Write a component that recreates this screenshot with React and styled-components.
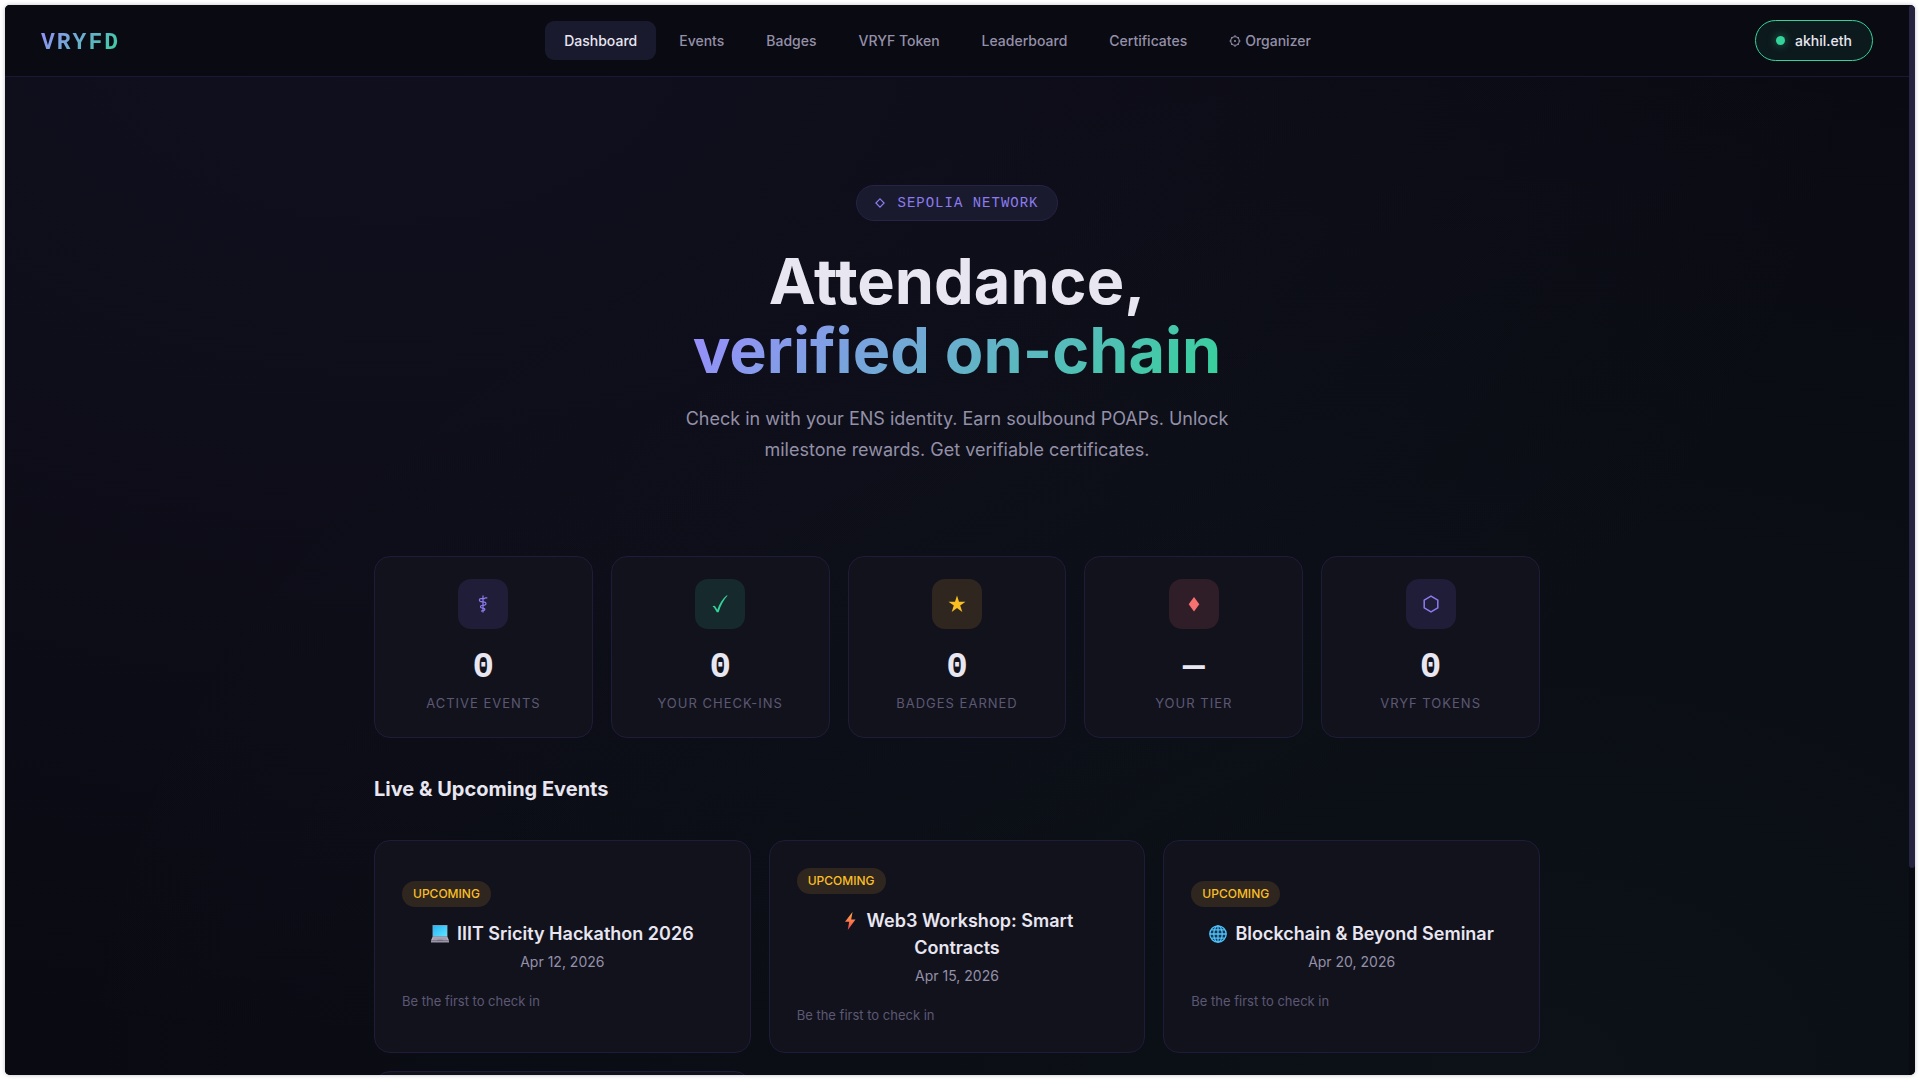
import React from 'react';
import styled, { createGlobalStyle } from 'styled-components';

const SANS = 'Inter, "Liberation Sans", sans-serif';
const MONO = '"Liberation Mono", monospace';

const GlobalStyle = createGlobalStyle`
  * {
    box-sizing: border-box;
  }

  body {
    margin: 0;
    background: #ffffff;
    color: #e8e6f0;
    font-family: ${SANS};
    -webkit-font-smoothing: antialiased;
  }

  h1, h2, h3, p {
    margin: 0;
  }
`;

const Screen = styled.div`
  height: 100vh;
  padding: 5px;
`;

const Shell = styled.div`
  display: flex;
  height: 100%;
  overflow: hidden;
  border-radius: 5px;
  box-shadow: 0 0 4px rgba(0, 0, 0, 0.25);
  background: #0a0a12;
`;

const Page = styled.div`
  flex: 1;
  min-width: 0;
  overflow: hidden;
  background:
    radial-gradient(ellipse at 20% 0%, rgba(124, 108, 240, 0.06) 0%, transparent 70%),
    radial-gradient(ellipse at 80% 100%, rgba(52, 211, 153, 0.04) 0%, transparent 70%),
    #0a0a12;
`;

const ScrollTrack = styled.div`
  width: 6px;
  background: #0a0a12;
`;

const ScrollThumb = styled.div`
  height: 80.7%;
  border-radius: 3px;
  background: #25233f;
`;

const Header = styled.header`
  display: flex;
  align-items: center;
  justify-content: space-between;
  height: 72px;
  padding: 0 36px;
  border-bottom: 1px solid #1a1934;
  background: #0a0a12;
`;

const Logo = styled.a`
  padding-top: 4px;
  font-family: ${MONO};
  font-size: 23px;
  font-weight: 700;
  letter-spacing: 2px;
  text-decoration: none;
  color: transparent;
  background: linear-gradient(135deg, #9b8cff, #34d399);
  background-clip: text;
`;

const Nav = styled.nav`
  display: flex;
  gap: 4px;
`;

const NavLink = styled.a`
  display: flex;
  align-items: center;
  gap: 4px;
  height: 39px;
  padding: 0 19px;
  border-radius: 9px;
  font-size: 14px;
  font-weight: 500;
  text-decoration: none;
  color: ${(p) => (p.$active ? '#e8e6f0' : '#9490a8')};
  background: ${(p) => (p.$active ? '#1a1a2e' : 'transparent')};
`;

const Wallet = styled.button`
  display: flex;
  align-items: center;
  gap: 10px;
  height: 41px;
  padding: 0 20px;
  border: 1px solid #34d399;
  border-radius: 21px;
  background: #0d1a1d;
  color: #e8e6f0;
  font-family: ${SANS};
  font-size: 14px;
  font-weight: 500;
`;

const Dot = styled.span`
  width: 9px;
  height: 9px;
  border-radius: 50%;
  background: #34d399;
  box-shadow: 0 0 9px rgba(52, 211, 153, 0.5);
`;

const Main = styled.main`
  max-width: 1166px;
  margin: 0 auto;
`;

const Hero = styled.section`
  display: flex;
  flex-direction: column;
  align-items: center;
  padding: 108px 0 91px;
  text-align: center;
`;

const Network = styled.div`
  display: flex;
  align-items: center;
  gap: 12px;
  height: 36px;
  margin-bottom: 26px;
  padding: 0 18px;
  border: 1px solid #262347;
  border-radius: 18px;
  background: #1a1a2e;
  color: #8b7cf0;
  font-family: ${MONO};
  font-size: 14px;
  letter-spacing: 1px;
`;

const Title = styled.h1`
  font-size: 63px;
  font-weight: 700;
  line-height: 69px;
`;

const Gradient = styled.span`
  display: block;
  color: transparent;
  background: linear-gradient(135deg, #9b8cff, #34d399);
  background-clip: text;
`;

const Lead = styled.p`
  max-width: 580px;
  margin-top: 18px;
  font-size: 18px;
  line-height: 31px;
  color: #9490a8;
`;

const Stats = styled.section`
  display: grid;
  grid-template-columns: repeat(5, 1fr);
  gap: 18px;
`;

const StatCard = styled.div`
  display: flex;
  flex-direction: column;
  align-items: center;
  height: 182px;
  padding-top: 22px;
  border: 1px solid #1f1c39;
  border-radius: 16px;
  background: #12121d;
`;

const tones = {
  purple: { color: '#8b7cf0', background: '#201d38' },
  green: { color: '#34d399', background: '#162a2e' },
  amber: { color: '#fbbf24', background: '#2f2620' },
  red: { color: '#f87171', background: '#2f1e28' },
};

const StatIcon = styled.div`
  display: flex;
  align-items: center;
  justify-content: center;
  width: 50px;
  height: 50px;
  margin-bottom: 21px;
  border-radius: 13px;
  color: ${(p) => tones[p.$tone].color};
  background: ${(p) => tones[p.$tone].background};
`;

const StatValue = styled.div`
  font-family: ${MONO};
  font-size: 36px;
  font-weight: 700;
  line-height: 36px;
`;

const StatLabel = styled.div`
  margin-top: 7px;
  font-size: 13px;
  line-height: 20px;
  letter-spacing: 1px;
  text-transform: uppercase;
  color: #5c5873;
`;

const SectionTitle = styled.h2`
  margin: 35px 0;
  font-size: 20px;
  font-weight: 700;
  line-height: 32px;
`;

const Events = styled.section`
  display: grid;
  grid-template-columns: repeat(3, 1fr);
  gap: 18px;
`;

const EventCard = styled.article`
  display: flex;
  flex-direction: column;
  justify-content: center;
  min-height: 213px;
  padding: 26px 27px;
  border: 1px solid #1f1c39;
  border-radius: 16px;
  background: #12121d;
`;

const Status = styled.span`
  align-self: flex-start;
  margin-bottom: 13px;
  padding: 0 11px;
  border-radius: 13px;
  font-size: 12px;
  font-weight: 500;
  line-height: 26px;
  text-transform: uppercase;
  color: #fbbf24;
  background: #2f2620;
`;

const EventName = styled.h3`
  font-size: 18px;
  font-weight: 600;
  line-height: 27px;
  text-align: center;

  svg {
    margin-right: 8px;
    vertical-align: -3px;
  }
`;

const EventDate = styled.p`
  margin-top: 3px;
  font-size: 14px;
  line-height: 24px;
  text-align: center;
  color: #9490a8;
`;

const EventNote = styled.p`
  margin-top: 17px;
  font-size: 13px;
  line-height: 21px;
  color: #5c5873;
`;

const GearIcon = () => (
  <svg width="12" height="14" viewBox="0 0 11 12" fill="none" stroke="currentColor">
    <circle cx="5.5" cy="6" r="3.9" />
    <path d="M5.5 .5V2M5.5 10v1.5M.5 6H2M9 6h1.5M2 2.5l1 1M8 8.5l1 1M9 2.5l-1 1M3 8.5l-1 1" strokeWidth=".9" />
    <circle cx="5.5" cy="6" r=".9" fill="currentColor" stroke="none" />
  </svg>
);

const DiamondOutline = () => (
  <svg width="10" height="10" viewBox="0 0 10 10" fill="none" stroke="currentColor" strokeWidth="1.2">
    <path d="M5 .9 9.1 5 5 9.1.9 5z" />
  </svg>
);

const StaffIcon = () => (
  <svg width="10" height="18" viewBox="0 0 10 18" fill="none" stroke="currentColor" strokeWidth="1.2">
    <path d="M5 .5v17" />
    <path d="M9.300 2.800H7.500L6.300 3.600H3C.8 3.600.8 6.500 3 6.700l3.500.5c2 .4 2 2.600 0 2.900l-2.700.4c-1.700.3-1.700 2.200 0 2.500l2 .4c1.500.3 1.300 1.800 0 2.100L3 16.200" />
  </svg>
);

const CheckIcon = () => (
  <svg width="18" height="18" viewBox="0 0 18 18" fill="currentColor">
    <path d="M1.500 11.500c1-.9 2.300-.9 3 .2l1.800 3C8.600 8.500 11.500 3.600 15.500.5h1.200C12.500 5 9.800 10.200 7.600 17.200H5.800L3 12.600c-.4-.6-.9-.6-1.500-1.100z" />
  </svg>
);

const StarIcon = () => (
  <svg width="18" height="18" viewBox="0 0 18 18" fill="currentColor">
    <path d="M9 .6l2 6.200h6.500l-5.300 3.800 2.100 6.300L9 13l-5.300 3.900 2.100-6.300L.5 6.800H7z" />
  </svg>
);

const DiamondIcon = () => (
  <svg width="12" height="16" viewBox="0 0 12 16" fill="currentColor">
    <path d="M6 1l5.300 7.200L6 15.500.7 8.200z" />
  </svg>
);

const HexIcon = () => (
  <svg width="16" height="18" viewBox="0 0 16 18" fill="none" stroke="currentColor" strokeWidth="1.5">
    <path d="M8 1.200l6.800 3.900v7.800L8 16.800l-6.800-3.900V5.100z" />
  </svg>
);

const LaptopIcon = () => (
  <svg width="18" height="18" viewBox="0 0 18 18">
    <defs>
      <linearGradient id="screen" x1="0" y1="0" x2="1" y2="1">
        <stop offset="0" stopColor="#28b4f4" />
        <stop offset="1" stopColor="#5ee4ff" />
      </linearGradient>
    </defs>
    <path d="M1.500 0h15v12h-15z" fill="#8a91a8" />
    <path d="M2 .6h14v10.600H2z" fill="url(#screen)" />
    <path d="M1.500 12h15l1.500 3.500H0z" fill="#b5b0c0" />
    <path d="M2.500 13h13M2 14.200h14" stroke="#8b8598" strokeWidth=".6" />
    <path d="M0 15.500h18v2H0z" fill="#9a94a8" />
    <path d="M6.500 14.800h5l.5 1.200H6z" fill="#726c80" />
  </svg>
);

const BoltIcon = () => (
  <svg width="18" height="18" viewBox="0 0 18 18">
    <defs>
      <linearGradient id="bolt" x1="0" y1="0" x2="0" y2="1">
        <stop offset="0" stopColor="#ffb04a" />
        <stop offset="1" stopColor="#f5434f" />
      </linearGradient>
    </defs>
    <path d="M11.500 0 4 9.700h4.200L6.800 18l7.700-10.400h-4.300z" fill="url(#bolt)" />
  </svg>
);

const GlobeIcon = () => (
  <svg width="18" height="18" viewBox="0 0 18 18">
    <circle cx="9" cy="9" r="8.4" fill="#12324f" />
    <g fill="none" stroke="#4fc3fa" strokeWidth="1.3">
      <circle cx="9" cy="9" r="8.2" />
      <ellipse cx="9" cy="9" rx="4.2" ry="8.200" />
      <path d="M9 .7v16.600M.7 9h16.600M2.200 4.800h13.600M2.200 13.200h13.600" />
    </g>
  </svg>
);

const navItems = ['Dashboard', 'Events', 'Badges', 'VRYF Token', 'Leaderboard', 'Certificates'];

const stats = [
  { label: 'Active Events', value: '0', tone: 'purple', Icon: StaffIcon },
  { label: 'Your Check-ins', value: '0', tone: 'green', Icon: CheckIcon },
  { label: 'Badges Earned', value: '0', tone: 'amber', Icon: StarIcon },
  { label: 'Your Tier', value: '—', tone: 'red', Icon: DiamondIcon },
  { label: 'VRYF Tokens', value: '0', tone: 'purple', Icon: HexIcon },
];

const events = [
  { name: 'IIIT Sricity Hackathon 2026', date: 'Apr 12, 2026', Icon: LaptopIcon },
  { name: 'Web3 Workshop: Smart Contracts', date: 'Apr 15, 2026', Icon: BoltIcon },
  { name: 'Blockchain & Beyond Seminar', date: 'Apr 20, 2026', Icon: GlobeIcon },
];

function App() {
  return (
    <Screen>
      <GlobalStyle />
      <Shell>
        <Page>
          <Header>
            <Logo href="#">VRYFD</Logo>
            <Nav>
              {navItems.map((item, i) => (
                <NavLink key={item} href="#" $active={i === 0}>{item}</NavLink>
              ))}
              <NavLink href="#"><GearIcon />Organizer</NavLink>
            </Nav>
            <Wallet type="button"><Dot />akhil.eth</Wallet>
          </Header>

          <Main>
            <Hero>
              <Network><DiamondOutline />SEPOLIA NETWORK</Network>
              <Title>
                Attendance,
                <Gradient>verified on-chain</Gradient>
              </Title>
              <Lead>
                Check in with your ENS identity. Earn soulbound POAPs. Unlock milestone rewards. Get verifiable certificates.
              </Lead>
            </Hero>

            <Stats>
              {stats.map(({ label, value, tone, Icon }) => (
                <StatCard key={label}>
                  <StatIcon $tone={tone}><Icon /></StatIcon>
                  <StatValue>{value}</StatValue>
                  <StatLabel>{label}</StatLabel>
                </StatCard>
              ))}
            </Stats>

            <SectionTitle>Live &amp; Upcoming Events</SectionTitle>
            <Events>
              {events.map(({ name, date, Icon }) => (
                <EventCard key={name}>
                  <Status>Upcoming</Status>
                  <EventName><Icon />{name}</EventName>
                  <EventDate>{date}</EventDate>
                  <EventNote>Be the first to check in</EventNote>
                </EventCard>
              ))}
              <EventCard />
            </Events>
          </Main>
        </Page>
        <ScrollTrack>
          <ScrollThumb />
        </ScrollTrack>
      </Shell>
    </Screen>
  );
}

export default App;
